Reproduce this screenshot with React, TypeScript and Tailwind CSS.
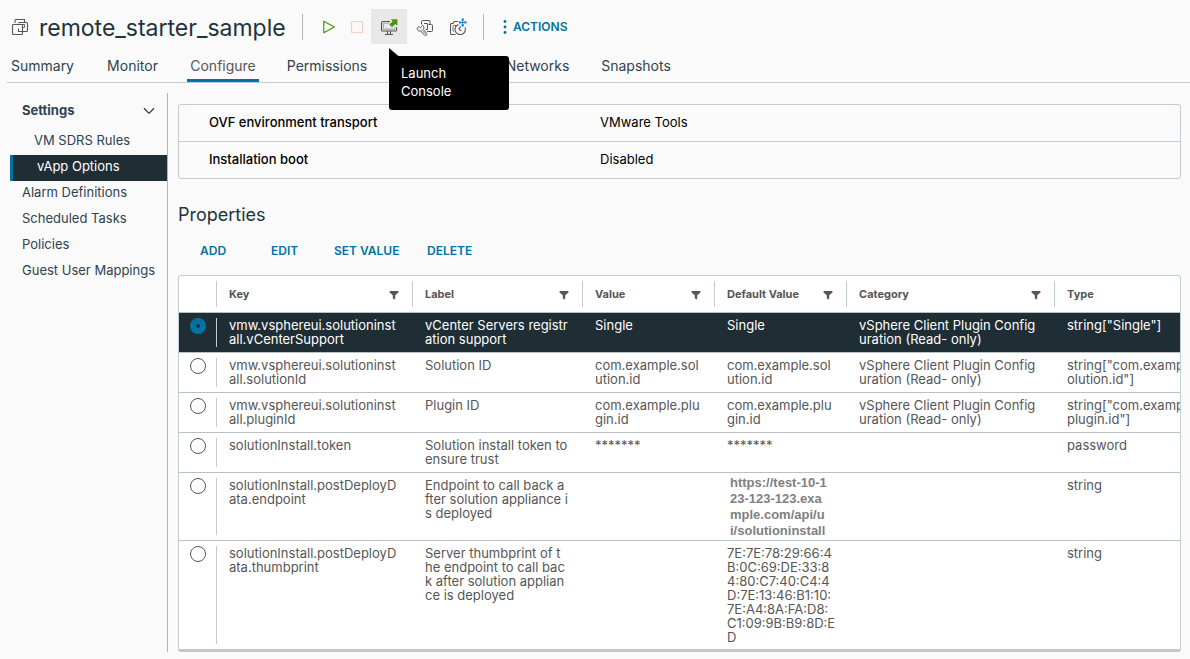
import { useState } from "react";

interface PropertyRow {
  key: string;
  label: string;
  value: string;
  defaultValue: string;
  category: string;
  type: string;
  masked?: boolean;
}

const TABS = [
  { name: "Summary", width: "w-[71px]" },
  { name: "Monitor", width: "w-[57px]" },
  { name: "Configure", width: "w-[72px]" },
  { name: "Permissions", width: "w-[84px]" },
  { name: "Networks", width: "ml-[108px] w-[69px]" },
  { name: "Snapshots", width: "w-[76px]" },
];

const MENU = ["Alarm Definitions", "Scheduled Tasks", "Policies", "Guest User Mappings"];

const COLUMNS = [
  { name: "Key", width: "w-[196px]" },
  { name: "Label", width: "w-[170px]" },
  { name: "Value", width: "w-[132px]" },
  { name: "Default Value", width: "w-[132px]" },
  { name: "Category", width: "w-[208px]" },
  { name: "Type", width: "" },
];

const CATEGORY = "vSphere Client Plugin Config\nuration (Read- only)";

const ROWS: PropertyRow[] = [
  {
    key: "vmw.vsphereui.solutioninst\nall.vCenterSupport",
    label: "vCenter Servers registr\nation support",
    value: "Single",
    defaultValue: "Single",
    category: CATEGORY,
    type: 'string["Single"]',
  },
  {
    key: "vmw.vsphereui.solutioninst\nall.solutionId",
    label: "Solution ID",
    value: "com.example.sol\nution.id",
    defaultValue: "com.example.sol\nution.id",
    category: CATEGORY,
    type: 'string["com.example.s\nolution.id"]',
  },
  {
    key: "vmw.vsphereui.solutioninst\nall.pluginId",
    label: "Plugin ID",
    value: "com.example.plu\ngin.id",
    defaultValue: "com.example.plu\ngin.id",
    category: CATEGORY,
    type: 'string["com.example.\nplugin.id"]',
  },
  {
    key: "solutionInstall.token",
    label: "Solution install token to\nensure trust",
    value: "*******",
    defaultValue: "*******",
    category: "",
    type: "password",
  },
  {
    key: "solutionInstall.postDeployD\nata.endpoint",
    label: "Endpoint to call back a\nfter solution appliance i\ns deployed",
    value: "",
    defaultValue: "https://test-10-1\n23-123-123.exa\nmple.com/api/u\ni/solutioninstall",
    category: "",
    type: "string",
    masked: true,
  },
  {
    key: "solutionInstall.postDeployD\nata.thumbprint",
    label: "Server thumbprint of t\nhe endpoint to call bac\nk after solution applian\nce is deployed",
    value: "",
    defaultValue:
      "7E:7E:78:29:66:4\nB:0C:69:DE:33:8\n4:80:C7:40:C4:4\nD:7E:13:46:B1:10:\n7E:A4:8A:FA:D8:\nC1:09:9B:B9:8D:E\nD",
    category: "",
    type: "string",
  },
];

function VmIcon() {
  return (
    <svg width="18" height="18" viewBox="0 0 18 18" fill="none" stroke="#565656" strokeWidth="1.1">
      <path d="M4 5V2.5Q4 1.5 5 1.5H13.5V4.5" />
      <rect x="1.5" y="6.5" width="10" height="10" rx=".8" />
      <path d="M8 5.5V4.5H15.5Q16.5 4.5 16.5 5.5V12.5Q16.5 13.5 15.5 13.5H7.5V10.5" />
      <path d="M9 6.5H13.5V9.5H11.5" strokeWidth="0.9" />
    </svg>
  );
}

function ConsoleIcon() {
  return (
    <svg width="18" height="18" viewBox="0 0 18 18" fill="none" stroke="#565656" strokeWidth="1.1">
      <path d="M10 3.5H2.5Q1.5 3.5 1.5 4.5V12Q1.5 13 2.5 13H15.5Q16.5 13 16.5 12V9" />
      <path d="M9.5 5.2H3.3V11.2H14.7V9.6" strokeWidth="0.5" />
      <path d="M7.5 13V16M10.5 13V16M5 16.5H13" />
      <path d="M10.8 1.2H17.4V7.8L15.4 5.9L12 9.3L9.3 6.6L12.7 3.2Z" fill="#48960c" stroke="none" />
    </svg>
  );
}

function SettingsIcon() {
  return (
    <svg width="18" height="18" viewBox="0 0 18 18" fill="none" stroke="#565656" strokeWidth="1">
      <path d="M5.5 5.5V2.5Q5.5 1.5 6.5 1.5H13Q14 1.5 14 2.5V5.5" />
      <path d="M8 4.5H11.5V10.5H9.5M12.5 5.5H15.5Q16.5 5.5 16.5 6.5V11.5Q16.5 12.5 15.5 12.5H11" />
      <path d="M6.8 6.4L4.4 8.8L3 7.4L1.2 9.2C1 11.2 2.6 12.6 4.6 12L8.6 16.2C10 17.4 11.6 15.8 10.6 14.4L7.4 10.4C8.2 9 8 7.4 6.8 6.4Z" />
      <path d="M5.6 10.6L9.4 15" strokeWidth="0.7" />
    </svg>
  );
}

function SnapshotIcon() {
  return (
    <svg width="18" height="18" viewBox="0 0 18 18" fill="none" stroke="#565656" strokeWidth="1.1">
      <path d="M6.6 16.5H2.5Q1.5 16.5 1.5 15.5V6.5Q1.5 5.5 2.5 5.5H4L5.2 3.5H9" />
      <path d="M7.4 7.5H5Q4 7.5 4 8.5V12.5Q4 13.5 5 13.5" strokeWidth="0.8" />
      <path d="M9.6 6.4A5.2 5.2 0 1 0 16 9.4M11.8 8.4L9.8 11L12.4 13.2" />
      <g fill="#0f82d4" stroke="none">
        <rect x="12.6" y="0.4" width="2.2" height="2.2" />
        <rect x="12.6" y="6.2" width="2.2" height="2.2" />
        <rect x="9.8" y="3.3" width="2.2" height="2.2" />
        <rect x="15.4" y="3.3" width="2.2" height="2.2" />
        <rect x="13.2" y="2" width="1" height="4.8" />
        <rect x="11.4" y="3.9" width="4.8" height="1" />
      </g>
    </svg>
  );
}

function FilterIcon() {
  return (
    <svg width="10" height="10" viewBox="0 0 10 10" fill="#565656">
      <path d="M.6 1H9.4V2.4L6.2 5.2V9.4L3.8 8.4V5.2L.6 2.4Z" />
    </svg>
  );
}

function Header() {
  return (
    <header className="flex h-[50px] items-center pt-1 pl-[11px]">
      <VmIcon />
      <h1 className="w-[264px] pt-px pl-2.5 text-[23px] leading-7 text-[#21333b]">remote_starter_sample</h1>
      <span className="mx-[9px] h-[26px] w-px bg-[#b3b3b3]" />
      <div className="flex items-center pb-0.5 pl-px">
        <button aria-label="Power On" className="flex w-[30px] justify-center pt-0.5 pl-px">
          <svg width="14" height="14" viewBox="0 0 14 14" fill="none" stroke="#48960c" strokeWidth="1.2">
            <path d="M1.8 1.2L12.4 7L1.8 12.8Z" strokeLinejoin="round" />
          </svg>
        </button>
        <button aria-label="Power Off" className="flex w-[28px] justify-center pt-0.5">
          <svg width="14" height="14" viewBox="0 0 14 14" fill="none" stroke="#f8cdc6" strokeWidth="1.2">
            <rect x="1.5" y="1.5" width="11" height="11" rx=".6" />
          </svg>
        </button>
        <div className="relative">
          <button
            aria-label="Launch Console"
            aria-describedby="console-tip"
            className="flex h-[35px] w-[36px] items-center justify-center bg-[#e8e8e8] pt-0.5"
          >
            <ConsoleIcon />
          </button>
          <div
            id="console-tip"
            role="tooltip"
            className="absolute top-[47px] left-[18px] z-10 w-[120px] rounded-[3px] rounded-tl-none bg-black px-3 pt-2 pb-[10px] text-[13px] leading-[18px] text-white"
          >
            <svg className="absolute -top-2 left-0" width="10" height="9" viewBox="0 0 10 9">
              <path d="M0 0L10 8.4V9H0Z" fill="#000" />
            </svg>
            Launch
            <br />
            Console
          </div>
        </div>
        <button aria-label="Edit Settings" className="flex w-[36px] justify-center pt-1">
          <SettingsIcon />
        </button>
        <button aria-label="Take Snapshot" className="flex w-[30px] justify-center pt-0.5">
          <SnapshotIcon />
        </button>
      </div>
      <span className="mr-[19px] ml-[10px] h-[26px] w-px bg-[#b3b3b3]" />
      <button className="flex items-center gap-1.5 text-[12px] font-semibold text-[#0072a3]">
        <svg width="4" height="16" viewBox="0 0 4 16" fill="#0072a3">
          <circle cx="2" cy="2.5" r="1.4" />
          <circle cx="2" cy="8" r="1.4" />
          <circle cx="2" cy="13.5" r="1.4" />
        </svg>
        ACTIONS
      </button>
    </header>
  );
}

function Sidebar() {
  return (
    <aside className="ml-[10px] w-[158px] shrink-0 border-r border-[#b3b3b3] pt-[5px] text-[13px] text-[#304250]">
      <button className="flex h-[26px] w-full items-center justify-between pr-3 pl-3 font-bold">
        Settings
        <svg width="12" height="8" viewBox="0 0 12 8" fill="none" stroke="#304250" strokeWidth="1.3">
          <path d="M1 1.2L6 6.4L11 1.2" />
        </svg>
      </button>
      <nav className="pt-[5px]">
        <a href="#sdrs" className="flex h-[26px] items-center pb-0.5 pl-6">
          VM SDRS Rules
        </a>
        <a
          href="#vapp"
          className="flex h-[26px] items-center border-l-[3px] border-[#0072a3] bg-[#1f2d35] pb-0.5 pl-6 text-white"
        >
          vApp Options
        </a>
        {MENU.map((item) => (
          <a key={item} href="#item" className="flex h-[26px] items-center pb-0.5 pl-3 whitespace-nowrap">
            {item}
          </a>
        ))}
      </nav>
    </aside>
  );
}

function PropertiesTable() {
  const [selected, setSelected] = useState(0);

  return (
    <div className="overflow-hidden rounded-[3px] border border-b-[3px] border-[#c1cdd4] border-b-[#c4c8ca] bg-white">
      <table className="w-full table-fixed border-collapse text-left text-[#565656]">
        <thead>
          <tr className="h-[36px] text-[11px]">
            <th className="w-[38px] p-0">
              <div className="h-[26px] border-r border-[#c1cdd4]" />
            </th>
            {COLUMNS.map((col) => (
              <th key={col.name} className={`p-0 ${col.width}`}>
                <div
                  className={`flex h-[26px] items-center justify-between pr-[13px] pl-3 ${
                    col.width ? "border-r border-[#c1cdd4]" : ""
                  }`}
                >
                  {col.name}
                  {col.width && (
                    <button aria-label={`Filter ${col.name}`} className="pt-0.5">
                      <FilterIcon />
                    </button>
                  )}
                </div>
              </th>
            ))}
          </tr>
        </thead>
        <tbody>
          {ROWS.map((row, i) => {
            const active = i === selected;
            return (
              <tr
                key={row.key}
                className={`h-10 border-t border-[#b9bfc2] align-top text-[13px] leading-[14px] whitespace-pre ${
                  active ? "bg-[#1f2d35] text-white" : ""
                }`}
              >
                <td className="h-px py-[5px] pr-0 pl-[11px]">
                  <div className="h-full border-r border-[#c1cdd4]">
                    <input
                      type="radio"
                      name="property"
                      aria-label={row.key}
                      checked={active}
                      onChange={() => setSelected(i)}
                      className={`block size-4 appearance-none rounded-full ${
                        active ? "border-[6px] border-[#0072a3] bg-[#1f2d35]" : "border border-[#565656] bg-white"
                      }`}
                    />
                  </div>
                </td>
                <td className="px-3 py-[5px]">{row.key}</td>
                <td className="px-3 py-[5px]">{row.label}</td>
                <td className="px-3 py-[5px]">{row.value}</td>
                {row.masked ? (
                  <td className="pt-0.5 pb-px pl-[15px] font-['Liberation_Sans',sans-serif] leading-4 font-bold text-[#808080]">
                    {row.defaultValue}
                  </td>
                ) : (
                  <td className="px-3 py-[5px]">{row.defaultValue}</td>
                )}
                <td className="px-3 py-[5px]">{row.category}</td>
                <td className="overflow-hidden py-[5px] pl-3">{row.type}</td>
              </tr>
            );
          })}
        </tbody>
      </table>
    </div>
  );
}

export default function App() {
  return (
    <div className="min-h-screen bg-[#fafafa] font-[Inter,sans-serif]">
      <Header />
      <nav className="ml-[7px] flex h-[33px] gap-[26px] border-b border-[#c1cdd4] text-[14px] text-[#304250]">
        {TABS.map((tab) => (
          <a
            key={tab.name}
            href="#tab"
            className={`flex items-center justify-center whitespace-nowrap ${tab.width} ${
              tab.name === "Configure" ? "border-b-[3px] border-[#0072a3] pt-px text-[#565656]" : "pb-0.5"
            }`}
          >
            {tab.name}
          </a>
        ))}
      </nav>
      <div className="flex pt-[10px] pb-[6px]">
        <Sidebar />
        <main className="min-w-0 grow pt-[11px] pr-[9px] pl-[10px]">
          <dl className="rounded-[3px] border border-[#c1cdd4] text-[13px] text-black">
            <div className="flex h-[37px] items-center border-b border-[#c1cdd4] pl-[30px]">
              <dt className="w-[391px] font-medium">OVF environment transport</dt>
              <dd>VMware Tools</dd>
            </div>
            <div className="flex h-[36px] items-center pl-[30px]">
              <dt className="w-[391px] font-medium">Installation boot</dt>
              <dd>Disabled</dd>
            </div>
          </dl>
          <h2 className="pt-6 text-[18px] leading-6 text-[#21333b]">Properties</h2>
          <div className="flex h-[48px] items-center pl-[22px] text-[12px] font-semibold text-[#0072a3]">
            <button className="w-[71px] text-left">ADD</button>
            <button className="w-[63px] text-left">EDIT</button>
            <button className="w-[93px] text-left">SET VALUE</button>
            <button>DELETE</button>
          </div>
          <PropertiesTable />
        </main>
      </div>
    </div>
  );
}
